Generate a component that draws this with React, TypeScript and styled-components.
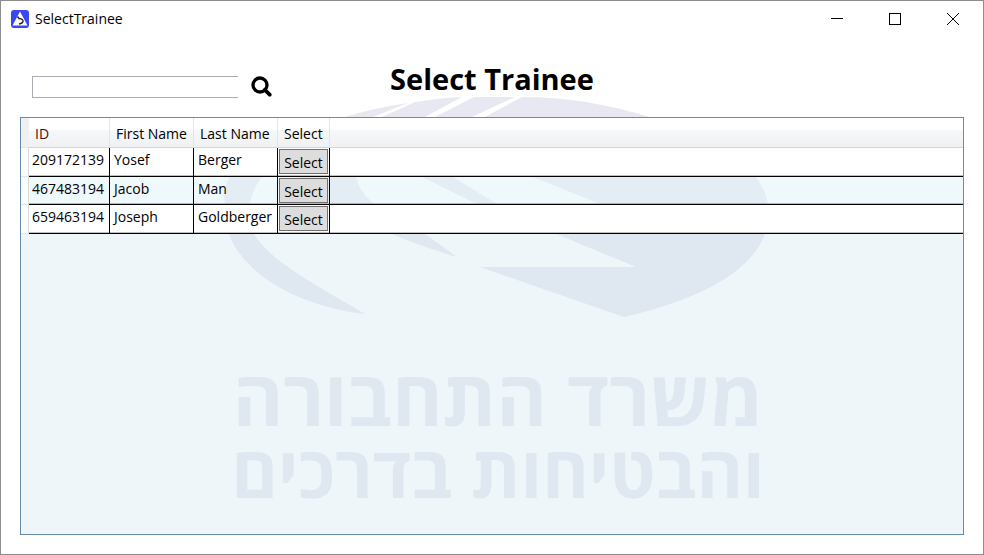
import React from "react";
import styled, { createGlobalStyle } from "styled-components";

const Global = createGlobalStyle`
  *, *::before, *::after { box-sizing: border-box; }
  body { margin: 0; background: #fff; }
  body, button, input { font: 14px/20px "Open Sans", "Noto Sans", sans-serif; color: #000; }
`;

const Window = styled.div`
  position: relative;
  display: flex;
  flex-direction: column;
  min-height: 100vh;
  border: 1px solid #8c8c8c;
  background: #fff;
`;

const TitleBar = styled.header`
  position: relative;
  display: flex;
  align-items: center;
  gap: 6px;
  height: 36px;
  padding-left: 10px;
`;

const WindowTitle = styled.span`
  flex: 1;
`;

const CaptionButtons = styled.div`
  display: flex;
  gap: 6px;
  padding-right: 4px;
`;

const CaptionButton = styled.button`
  display: grid;
  place-items: center;
  width: 52px;
  height: 36px;
  padding: 0;
  border: 0;
  background: transparent;
`;

const Watermark = styled.div`
  position: absolute;
  inset: 95px 0 0 12px;
  display: flex;
  flex-direction: column;
  align-items: center;
  overflow: hidden;
  color: #e8e8f2;
`;

const Emblem = styled.svg`
  flex: none;
  margin-bottom: 42px;
`;

const Ministry = styled.div<{ $size: number }>`
  font-size: ${(p) => p.$size}px;
  line-height: 74px;
  font-weight: 700;
  white-space: nowrap;
`;

const Main = styled.main`
  position: relative;
  flex: 1;
  display: flex;
  flex-direction: column;
  padding: 19px;
`;

const Toolbar = styled.div`
  display: grid;
  grid-template-columns: 1fr auto 1fr;
  align-items: center;
  height: 61px;
`;

const Search = styled.form`
  display: flex;
  align-items: center;
  gap: 13px;
  padding-left: 12px;
`;

const SearchInput = styled.input`
  width: 206px;
  height: 22px;
  padding: 0 4px;
  border: 1px solid #abadb3;
  border-right: 0;
  border-radius: 0;
  background: #fff;
`;

const SearchButton = styled.button`
  display: flex;
  padding: 0;
  border: 0;
  background: transparent;
`;

const Heading = styled.h1`
  margin: 0 0 16px;
  font-size: 29px;
  line-height: 40px;
  font-weight: 700;
`;

const Grid = styled.div`
  flex: 1;
  border: 1px solid #688caf;
  background: rgba(206, 229, 241, 0.35);
`;

const Table = styled.table`
  width: 100%;
  border-collapse: separate;
  border-spacing: 0;
  table-layout: fixed;
`;

const Col = styled.col<{ $width?: number }>`
  width: ${(p) => (p.$width ? `${p.$width}px` : "auto")};
`;

const HeadCell = styled.th<{ $accent?: boolean }>`
  height: 30px;
  padding: 2px 0 0 6px;
  border-right: 1px solid #e4e5e7;
  border-bottom: 1px solid #d5d5d5;
  background: linear-gradient(#fff 0 40%, #f7f8fa 40%, #f0f1f3);
  color: ${(p) => (p.$accent ? "#4a0f0f" : "#000")};
  font-weight: 400;
  text-align: left;
  white-space: nowrap;

  &:last-child {
    border-right: 0;
  }
`;

const CornerCell = styled.td`
  padding: 0;
  border-bottom: 1px solid #e4e5e7;
  background: #f0f0f0;
`;

const Cell = styled.td`
  height: 29px;
  padding: 2px 0 0 4px;
  border-right: 1px solid #000;
  border-bottom: 1px solid #000;
  box-shadow: inset 0 -1px rgba(0, 0, 0, 0.25);
  vertical-align: top;
  white-space: nowrap;

  &:last-child {
    border-right: 0;
  }
`;

const IdCell = styled(Cell)`
  padding-left: 3px;
`;

const ActionCell = styled(Cell)`
  padding: 1px;
`;

const RowHeader = styled.td`
  padding: 0;
  border-right: 1px solid #d8dadc;
  border-bottom: 1px solid #e4e5e7;
  background: #fbfcfc;
`;

const Row = styled.tr`
  background: #fff;

  &:nth-child(even) {
    background: rgba(245, 255, 252, 0.25);
  }

  &:nth-child(even) > ${Cell} {
    height: 28px;
  }
`;

const SelectButton = styled.button`
  display: block;
  width: 100%;
  height: 25px;
  padding: 2px 0 0;
  border: 1px solid #707070;
  background: #ddd;
`;

const trainees = [
  { id: "209172139", first: "Yosef", last: "Berger" },
  { id: "467483194", first: "Jacob", last: "Man" },
  { id: "659463194", first: "Joseph", last: "Goldberger" },
];

export default function App() {
  return (
    <Window>
      <Global />
      <Watermark aria-hidden="true">
        <Emblem width="548" height="222" viewBox="224 96 548 222" fill="#e8e8f2">
          <path d="M408 103Q374 108 345 117Q245 146 230 177Q222 190 225 203C224 212 225 223 229 234C240 266 285 304 365 314C325 290 270 262 254 234C248 222 248 212 250 203Q252 190 262 177Q300 146 373 117Z" />
          <path d="M415 102Q440 98 462 97L425 117Q362 145 356 177Q358 190 373 203Q390 220 425 234L457 257Q420 246 392 234Q345 217 325 203Q300 190 300 177Q320 145 382 117Z" />
          <path d="M474 97H515L472 117Q445 140 453 177L510 212Q490 208 475 203L422 177Q390 145 435 117Z" />
          <path d="M522 97C570 97 610 105 650 117Q735 144 756 177Q765 190 768 203Q770 218 765 234C752 268 710 297 624 317L480 267H636L525 221L640 220L533 177Q460 145 485 117Z" />
        </Emblem>
        <Ministry $size={77} lang="he" dir="rtl">משרד התחבורה</Ministry>
        <Ministry $size={71} lang="he" dir="rtl">והבטיחות בדרכים</Ministry>
      </Watermark>
      <TitleBar>
        <svg width="18" height="18" viewBox="0 0 18 18">
          <rect width="18" height="18" rx="3" fill="#3c46f5" />
          <path d="M9 1.5L16.5 15.5H1.5Z" fill="#fff" />
          <path d="M6.5 6.5L8 8.5Q12.5 9 12 11.5Q11.5 13.5 8 14" fill="none" stroke="#222" strokeWidth="1.4" />
        </svg>
        <WindowTitle>SelectTrainee</WindowTitle>
        <CaptionButtons>
          <CaptionButton aria-label="Minimize">
            <svg width="12" height="12" viewBox="0 0 12 12"><path d="M0 5.5H12" stroke="#000" /></svg>
          </CaptionButton>
          <CaptionButton aria-label="Maximize">
            <svg width="12" height="12" viewBox="0 0 12 12"><rect x=".5" y=".5" width="11" height="11" fill="none" stroke="#000" /></svg>
          </CaptionButton>
          <CaptionButton aria-label="Close">
            <svg width="12" height="12" viewBox="0 0 12 12"><path d="M0 0L12 12M12 0L0 12" stroke="#000" /></svg>
          </CaptionButton>
        </CaptionButtons>
      </TitleBar>
      <Main>
        <Toolbar>
          <Search onSubmit={(e) => e.preventDefault()}>
            <SearchInput type="text" aria-label="Search trainee" />
            <SearchButton type="submit" aria-label="Search">
              <svg width="21" height="21" viewBox="0 0 21 21" fill="none" stroke="#000">
                <circle cx="9" cy="9" r="7" strokeWidth="3.3" />
                <path d="M13.8 13.8L18.7 18.7" strokeWidth="3.8" strokeLinecap="round" />
              </svg>
            </SearchButton>
          </Search>
          <Heading>Select Trainee</Heading>
        </Toolbar>
        <Grid>
          <Table>
            <colgroup>
              <Col $width={8} />
              <Col $width={81} />
              <Col $width={84} />
              <Col $width={84} />
              <Col $width={52} />
              <Col />
            </colgroup>
            <thead>
              <tr>
                <CornerCell />
                <HeadCell $accent>ID</HeadCell>
                <HeadCell>First Name</HeadCell>
                <HeadCell>Last Name</HeadCell>
                <HeadCell>Select</HeadCell>
                <HeadCell />
              </tr>
            </thead>
            <tbody>
              {trainees.map((t) => (
                <Row key={t.id}>
                  <RowHeader />
                  <IdCell>{t.id}</IdCell>
                  <Cell>{t.first}</Cell>
                  <Cell>{t.last}</Cell>
                  <ActionCell>
                    <SelectButton type="button">Select</SelectButton>
                  </ActionCell>
                  <Cell />
                </Row>
              ))}
            </tbody>
          </Table>
        </Grid>
      </Main>
    </Window>
  );
}
